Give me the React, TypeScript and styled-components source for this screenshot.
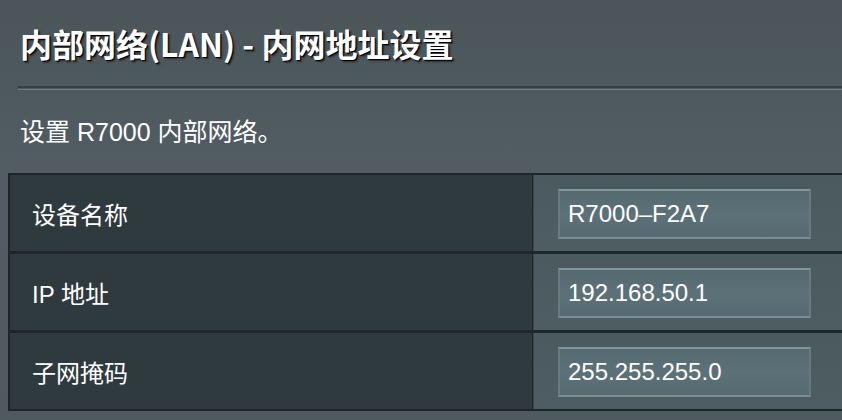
import React from "react";
import styled, { createGlobalStyle } from "styled-components";

const Global = createGlobalStyle`
  html, body { margin: 0; padding: 0; }
  body {
    width: 842px;
    height: 420px;
    overflow: hidden;
    background: linear-gradient(180deg, #4b555a 0%, #515d62 40%, #4f5a5f 100%);
    font-family: "Liberation Sans", "Noto Sans CJK SC", sans-serif;
    color: #ffffff;
  }
`;

const Page = styled.div`
  width: 842px;
  height: 420px;
  overflow: hidden;
  display: flex;
  flex-direction: column;
`;

const Title = styled.h1`
  margin: 0;
  padding: 23px 0 0 20px;
  height: 62px;
  box-sizing: border-box;
  font-family: "Noto Sans CJK SC", sans-serif;
  font-size: 32px;
  font-weight: 700;
  line-height: 40px;
  color: #ffffff;
  text-shadow: 1px 1px 0 #000, 2px 2px 2px rgba(0, 0, 0, 0.5);
  white-space: nowrap;
`;

const Divider = styled.div`
  margin: 24px 0 0 18px;
  height: 1px;
  border-top: 2px solid #343f43;
  border-bottom: 1px solid #6d7c81;
`;

const Subtitle = styled.p`
  margin: 0;
  padding: 27px 0 0 20px;
  height: 83px;
  box-sizing: border-box;
  font-size: 25px;
  line-height: 30px;
  color: #ffffff;
  white-space: nowrap;
`;

const Table = styled.div`
  margin-left: 8px;
  width: 900px;
  display: grid;
  grid-template-columns: 522px 1fr;
  border: 2px solid #1f2528;
  border-right: none;
  background: #1f2528;
  gap: 3px 1px;
`;

const LabelCell = styled.div`
  height: 76px;
  box-sizing: border-box;
  padding-left: 22px;
  display: flex;
  align-items: center;
  background: #2e3a3e;
  font-size: 24px;
  color: #ffffff;
`;

const ValueCell = styled.div`
  height: 76px;
  box-sizing: border-box;
  padding: 14px 0 0 24px;
  background: linear-gradient(180deg, #4a5a5e 0%, #4d5d62 100%);
  border-left: 1px solid #3a484c;
`;

const Input = styled.div`
  width: 253px;
  height: 50px;
  box-sizing: border-box;
  border: 2px solid #667a80;
  border-top-color: #82969b;
  border-bottom-color: #7a8e93;
  background: linear-gradient(180deg, #556a70 0%, #5d7278 50%, #566b71 100%);
  padding-left: 8px;
  display: flex;
  align-items: center;
  font-size: 24px;
  color: #ffffff;
  white-space: nowrap;
`;

const rows = [
  { label: "设备名称", value: "R7000–F2A7" },
  { label: "IP 地址", value: "192.168.50.1" },
  { label: "子网掩码", value: "255.255.255.0" },
];

export default function App() {
  return (
    <Page>
      <Global />
      <Title>内部网络(LAN) - 内网地址设置</Title>
      <Divider />
      <Subtitle>设置 R7000 内部网络。</Subtitle>
      <Table>
        {rows.map((r) => (
          <React.Fragment key={r.label}>
            <LabelCell>{r.label}</LabelCell>
            <ValueCell>
              <Input>{r.value}</Input>
            </ValueCell>
          </React.Fragment>
        ))}
      </Table>
    </Page>
  );
}
